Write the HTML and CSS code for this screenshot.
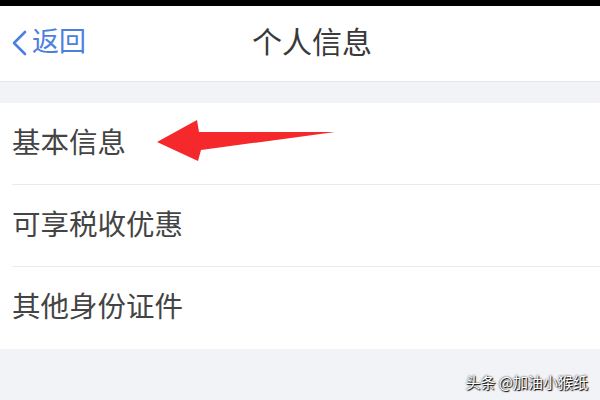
FILE: index.html
```html
<!DOCTYPE html>
<html lang="zh">
<head>
    <meta charset="UTF-8">
    <meta name="viewport" content="width=device-width, initial-scale=1.0">
    <title>个人信息</title>
    <link rel="stylesheet" href="styles.css">
</head>
<body>
    <div class="status-bar"></div>

    <div class="nav-bar">
        <div class="back">
            <svg class="back-icon" width="16" height="26" viewBox="0 0 16 26">
                <path d="M14 2 L3 13 L14 24" fill="none" stroke="#4b80e0" stroke-width="2.6" stroke-linecap="round" stroke-linejoin="round"/>
            </svg>
            <span>返回</span>
        </div>
        <div class="nav-title">个人信息</div>
    </div>

    <div class="list">
        <div class="list-item">
            <span>基本信息</span>
            <svg class="pointer" width="190" height="50" viewBox="0 0 190 50">
                <polygon points="0,23 40,1 42,13 178,13 44,31 41,42" fill="#f5292b"/>
            </svg>
        </div>
        <div class="list-item"><span>可享税收优惠</span></div>
        <div class="list-item"><span>其他身份证件</span></div>
    </div>

    <div class="footer">
        <span class="watermark">头条 @加油小猴纸</span>
    </div>
</body>
</html>
```

FILE: styles.css
```css
body {
    margin: 0;
    width: 600px;
    height: 400px;
    overflow: hidden;
    background: #f2f3f7;
    font-family: "Noto Sans CJK SC", "Noto Sans", sans-serif;
}
.status-bar {
    height: 6px;
    background: #000;
}
.nav-bar {
    position: relative;
    height: 76px;
    box-sizing: border-box;
    padding: 0 0 8px 24px;
    background: #fff;
    border-bottom: 1px solid #e4e5ea;
    display: flex;
    align-items: center;
    justify-content: center;
}
.back {
    position: absolute;
    left: 11px;
    top: 0;
    bottom: 8px;
    display: flex;
    align-items: center;
    gap: 5px;
    color: #4b80e0;
    font-size: 27px;
}
.back-icon {
    margin-top: 6px;
}
.nav-title {
    font-size: 30px;
    color: #3a3a3a;
}
.list {
    margin-top: 21px;
    background: #fff;
}
.list-item {
    position: relative;
    height: 82px;
    box-sizing: border-box;
    padding-bottom: 7px;
    margin-left: 12px;
    display: flex;
    align-items: center;
    font-size: 28.5px;
    color: #444;
    border-bottom: 1px solid #ebebee;
}
.list-item:last-child {
    border-bottom: none;
}
.pointer {
    position: absolute;
    left: 145px;
    top: 16px;
}
.footer {
    display: flex;
    justify-content: flex-end;
    padding: 22px 12px 0 0;
}
.watermark {
    font-size: 15px;
    color: #fff;
    text-shadow: 0 0 2px #000, 1px 1px 1px #000;
}
```
